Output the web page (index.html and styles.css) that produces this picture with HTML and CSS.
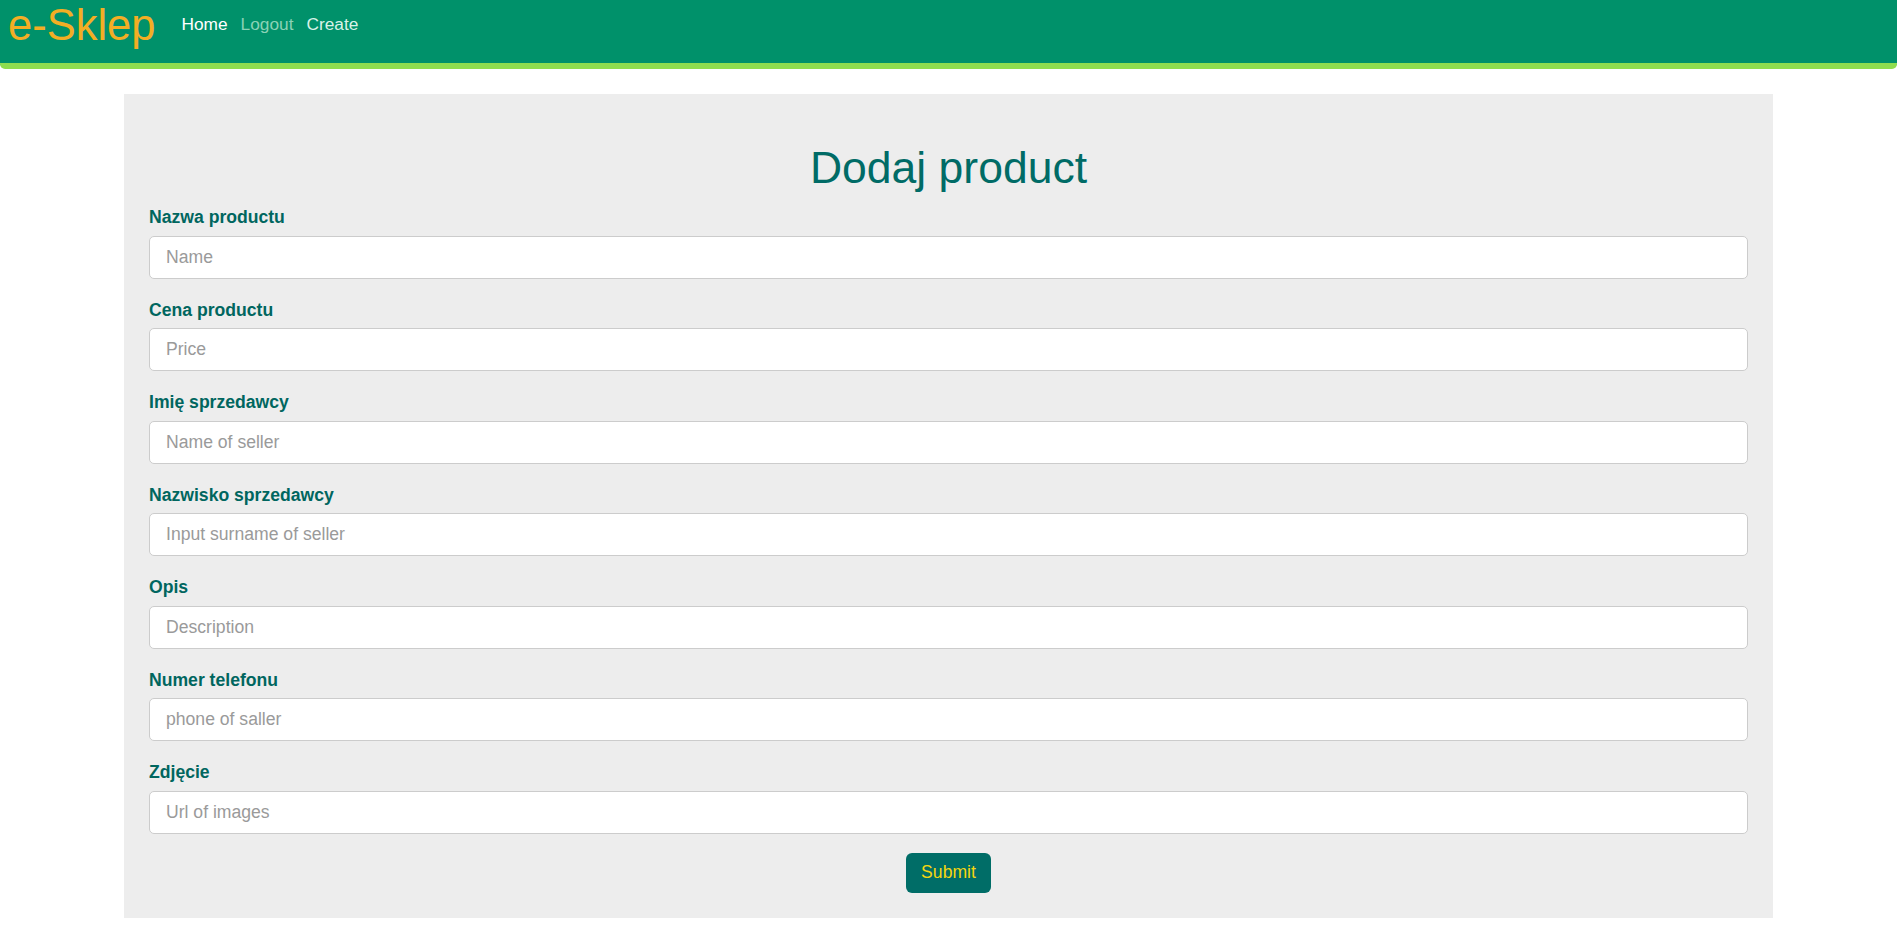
FILE: index.html
```html
<!DOCTYPE html>
<html lang="pl">
<head>
<meta charset="utf-8">
<title>e-Sklep</title>
<link rel="stylesheet" href="styles.css">
</head>
<body>
<header class="topbar">
  <a class="logo" href="#">e-Sklep</a>
  <nav class="nav">
    <a class="nav-link nav-active" href="#">Home</a>
    <a class="nav-link nav-muted" href="#">Logout</a>
    <a class="nav-link nav-light" href="#">Create</a>
  </nav>
</header>
<main class="panel">
  <h1 class="title">Dodaj product</h1>
  <form class="form">
    <div class="field">
      <label class="label" for="name">Nazwa productu</label>
      <input class="input" id="name" type="text" placeholder="Name">
    </div>
    <div class="field">
      <label class="label" for="price">Cena productu</label>
      <input class="input" id="price" type="text" placeholder="Price">
    </div>
    <div class="field">
      <label class="label" for="seller">Imię sprzedawcy</label>
      <input class="input" id="seller" type="text" placeholder="Name of seller">
    </div>
    <div class="field">
      <label class="label" for="surname">Nazwisko sprzedawcy</label>
      <input class="input" id="surname" type="text" placeholder="Input surname of seller">
    </div>
    <div class="field">
      <label class="label" for="desc">Opis</label>
      <input class="input" id="desc" type="text" placeholder="Description">
    </div>
    <div class="field">
      <label class="label" for="phone">Numer telefonu</label>
      <input class="input" id="phone" type="text" placeholder="phone of saller">
    </div>
    <div class="field">
      <label class="label" for="img">Zdjęcie</label>
      <input class="input" id="img" type="text" placeholder="Url of images">
    </div>
    <div class="actions">
      <button class="submit" type="button">Submit</button>
    </div>
  </form>
</main>
</body>
</html>
```
FILE: styles.css
```css
* { box-sizing: border-box; }

body {
  margin: 0;
  font-family: "Liberation Sans", Arial, sans-serif;
  background: #ffffff;
}

.topbar {
  display: flex;
  align-items: flex-start;
  height: 69px;
  padding-left: 8px;
  background: #00916a;
  border-bottom: 6px solid #8fdd4f;
  border-radius: 0 0 5px 5px;
}

.logo {
  font-size: 43.5px;
  line-height: normal;
  margin-top: 1px;
  color: #f3ae24;
  text-decoration: none;
}

.nav {
  display: flex;
  gap: 13px;
  margin-left: 26px;
  margin-top: 14px;
}

.nav-link {
  font-size: 17.3px;
  line-height: normal;
  text-decoration: none;
}

.nav-active { color: #ffffff; }
.nav-muted { color: #8ad2b6; }
.nav-light { color: #d9f2e8; }

.panel {
  width: 1649px;
  margin: 25px auto 0;
  padding: 0 25px 25px;
  background: #ededed;
  overflow: hidden;
}

.title {
  margin: 49px 0 13px;
  font-size: 44.5px;
  font-weight: normal;
  line-height: 50px;
  text-align: center;
  color: #006b66;
}

.form {
  display: flex;
  flex-direction: column;
  gap: 20px;
}

.field {
  display: flex;
  flex-direction: column;
  gap: 8px;
}

.label {
  padding-top: 1px;
  font-size: 17.6px;
  font-weight: bold;
  line-height: 20.5px;
  color: #00665f;
}

.input {
  width: 100%;
  height: 43px;
  padding: 0 16px;
  border: 1px solid #cccccc;
  border-radius: 5px;
  background: #ffffff;
  font-family: "Liberation Sans", Arial, sans-serif;
  font-size: 17.6px;
  color: #333333;
}

.input::placeholder { color: #9a9a9a; }

.actions {
  display: flex;
  justify-content: center;
  margin-top: -1px;
}

.submit {
  height: 40px;
  padding: 0 15px;
  border: none;
  border-radius: 6px;
  background: #006d67;
  color: #f5d60f;
  font-family: "Liberation Sans", Arial, sans-serif;
  font-size: 17.6px;
  cursor: pointer;
}
```
